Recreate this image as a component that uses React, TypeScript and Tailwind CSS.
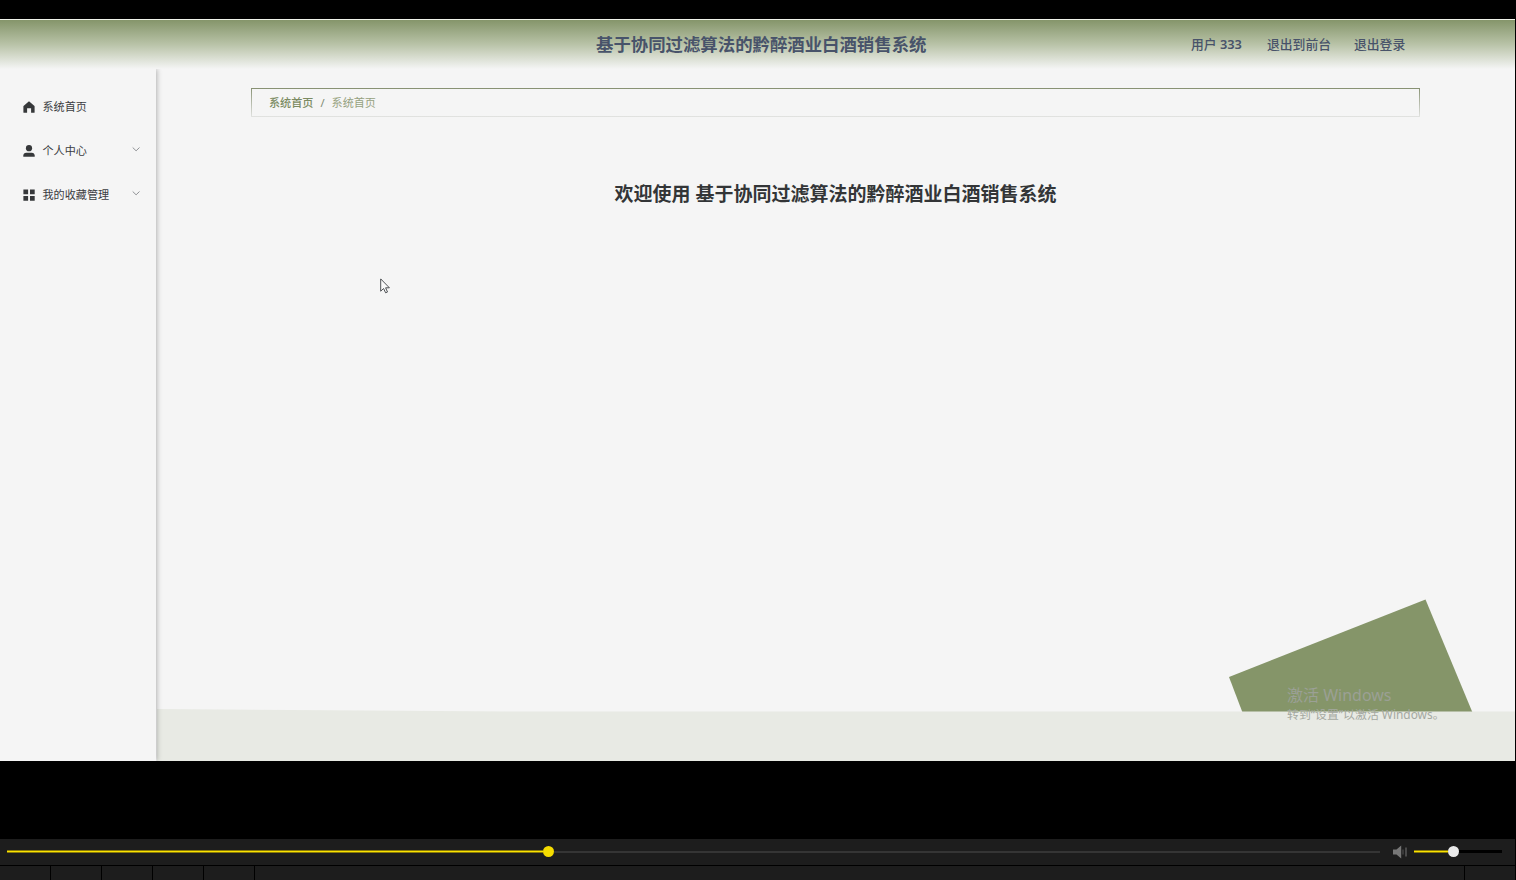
const menu = [
    { label: "系统首页", icon: "home", expandable: false },
    { label: "个人中心", icon: "user", expandable: true },
    { label: "我的收藏管理", icon: "grid", expandable: true },
];

function MenuIcon({ name }: { name: string }) {
    return (
        <svg viewBox="0 0 12 12" className="size-3 shrink-0" fill="#36383a">
            {name === "home" && (
                <path d="M6 .3 11.200 4.800a1 1 0 0 1 .4.8v5.600a.5.5 0 0 1-.5.5H8.100V7.200H4.100v4.500H.9a.5.5 0 0 1-.5-.5V5.600A1 1 0 0 1 .8 4.800Z" />
            )}
            {name === "user" && (
                <>
                    <circle cx="6" cy="3.200" r="3.100" />
                    <path d="M.3 11.800v-1.200C.3 8.800 1.600 7.700 3.200 7.700h5.600c1.600 0 2.900 1.100 2.900 2.900v1.200Z" />
                </>
            )}
            {name === "grid" && (
                <path d="M.4.600h4.700v4.700H.4ZM7 .600h4.700v4.700H7ZM.4 7h4.700v4.700H.4ZM7 7h4.700v4.700H7Z" />
            )}
        </svg>
    );
}

function Header() {
    return (
        <header className="h-[50px] shrink-0 border-t border-[#f0f3ea] bg-linear-to-b from-[#85956a] via-[#b9c3a8] via-50% to-[#f5f5f5] flex items-center text-[#48536a] font-bold">
            <div className="w-[596px] shrink-0" />
            <h1 className="w-[595px] shrink-0 pb-px text-[17.4px] leading-6 whitespace-nowrap">
                基于协同过滤算法的黔醉酒业白酒销售系统
            </h1>
            <nav className="flex text-[12.8px] leading-5 font-medium whitespace-nowrap pb-px">
                <span className="w-[76px]">
                    用户 <span className="font-semibold">333</span>
                </span>
                <a className="w-[87px]">退出到前台</a>
                <a>退出登录</a>
            </nav>
        </header>
    );
}

function Sidebar() {
    return (
        <aside className="relative z-10 mr-px w-[156px] shrink-0 bg-[#f5f5f5] pt-4 shadow-[1px_0_5px_rgba(0,0,0,0.28)] [clip-path:inset(0_-10px_0_0)]">
            <ul>
                {menu.map((item) => (
                    <li
                        key={item.label}
                        className="flex h-11 items-center pl-[22.5px] pr-[15px] text-[11.1px] text-[#3a3c3f]"
                    >
                        <MenuIcon name={item.icon} />
                        <span className="ml-2 flex-1 whitespace-nowrap">{item.label}</span>
                        {item.expandable && (
                            <svg
                                viewBox="0 0 10 10"
                                className="mb-[5px] size-[10px]"
                                fill="none"
                                stroke="#85878b"
                                strokeWidth="0.9"
                            >
                                <path d="m1.7 3.5 3.4 3.3 3.4-3.3" />
                            </svg>
                        )}
                    </li>
                ))}
            </ul>
        </aside>
    );
}

function Main() {
    return (
        <main className="relative flex-1">
            <svg
                viewBox="0 0 1358 692"
                className="absolute top-0 left-0 h-[692px] w-[1358px]"
            >
                <path d="M1072 608 1268.500 530.500 1315.500 643.500H1085.500Z" fill="#859569" />
                <path d="M-1 640 365 642.500H1358V692H-1Z" fill="#e8eae4" />
            </svg>

            <div className="relative pt-[19px] pl-[94px]">
                <div className="flex h-[29px] w-[1169px] items-center border-2 border-b pl-[16px] text-[11.1px] [border-image:linear-gradient(#858f70,#e2e3e1)_2_1_1_1/1.5px_1.5px_1px_1.5px]">
                    <span className="font-medium text-[#7b8b62]">系统首页</span>
                    <span className="px-[7px] text-[#7d8a70]">/</span>
                    <span className="text-[#95a180]">系统首页</span>
                </div>
                <h2 className="mt-[62px] w-[1169px] text-center text-[19px] leading-[30px] font-bold whitespace-nowrap text-[#333537]">
                    欢迎使用 基于协同过滤算法的黔醉酒业白酒销售系统
                </h2>
            </div>

            {/* mouse pointer */}
            <svg viewBox="0 0 10 16" className="absolute top-[209px] left-[222.5px] h-4 w-[10px]">
                <path
                    d="M.7.9v12.300l2.900-2.700 2 4.300 1.900-.8-1.900-4.200h3.800Z"
                    fill="#fafafa"
                    stroke="#3c4044"
                    strokeWidth="0.9"
                />
            </svg>

            {/* system activation watermark */}
            <div className="absolute top-[615px] left-[1130px] whitespace-nowrap text-[#9ba095]">
                <p className="text-[16px] leading-[22px]">激活 Windows</p>
                <p className="text-[11.900px] leading-[16px] text-[#a4a8a0]">转到“设置”以激活 Windows。</p>
            </div>
        </main>
    );
}

function Player() {
    return (
        <footer className="mt-[78px] flex flex-1 flex-col bg-black">
            <div className="flex h-[26px] items-center bg-[#1d1d1d] pb-px pl-[7px]">
                <div className="h-[3px] w-[536px] border-y border-[#8a7b08] bg-[#fbe300]" />
                <div className="size-[11px] rounded-full bg-[#f5dc00]" />
                <div className="h-[2px] w-[826px] bg-[#353535]" />
                <svg viewBox="0 0 16 14" className="ml-3 h-[14px] w-4" fill="#777">
                    <path d="M1 4.500h3.500L9.200.5v13L4.500 9.500H1Z" />
                    <path d="M10.500 4.500h1v5h-1Z" fill="#555" />
                    <path d="M13.500 2.500h1v9h-1Z" />
                </svg>
                <div className="ml-[6px] h-[3px] w-[34px] border-y border-[#8a7b08] bg-[#fbe300]" />
                <div className="size-[11px] rounded-full bg-[#eaeaea]" />
                <div className="h-[3px] w-[43px] bg-black" />
            </div>
            <div className="mt-px flex flex-1 gap-px">
                <div className="w-[50px] bg-[#1d1d1d]" />
                <div className="w-[50px] bg-[#1d1d1d]" />
                <div className="w-[50px] bg-[#1d1d1d]" />
                <div className="w-[50px] bg-[#1d1d1d]" />
                <div className="w-[50px] bg-[#1d1d1d]" />
                <div className="flex-1 bg-[#1d1d1d]" />
                <div className="w-[50px] bg-[#1d1d1d]" />
            </div>
        </footer>
    );
}

export default function App() {
    return (
        <div className="flex h-[880px] w-[1516px] flex-col overflow-hidden bg-black pt-[19px] pr-px font-['Noto_Sans','Noto_Sans_CJK_SC',sans-serif]">
            <div className="flex h-[742px] shrink-0 flex-col bg-[#f5f5f5]">
                <Header />
                <div className="flex flex-1">
                    <Sidebar />
                    <Main />
                </div>
            </div>
            <Player />
        </div>
    );
}
